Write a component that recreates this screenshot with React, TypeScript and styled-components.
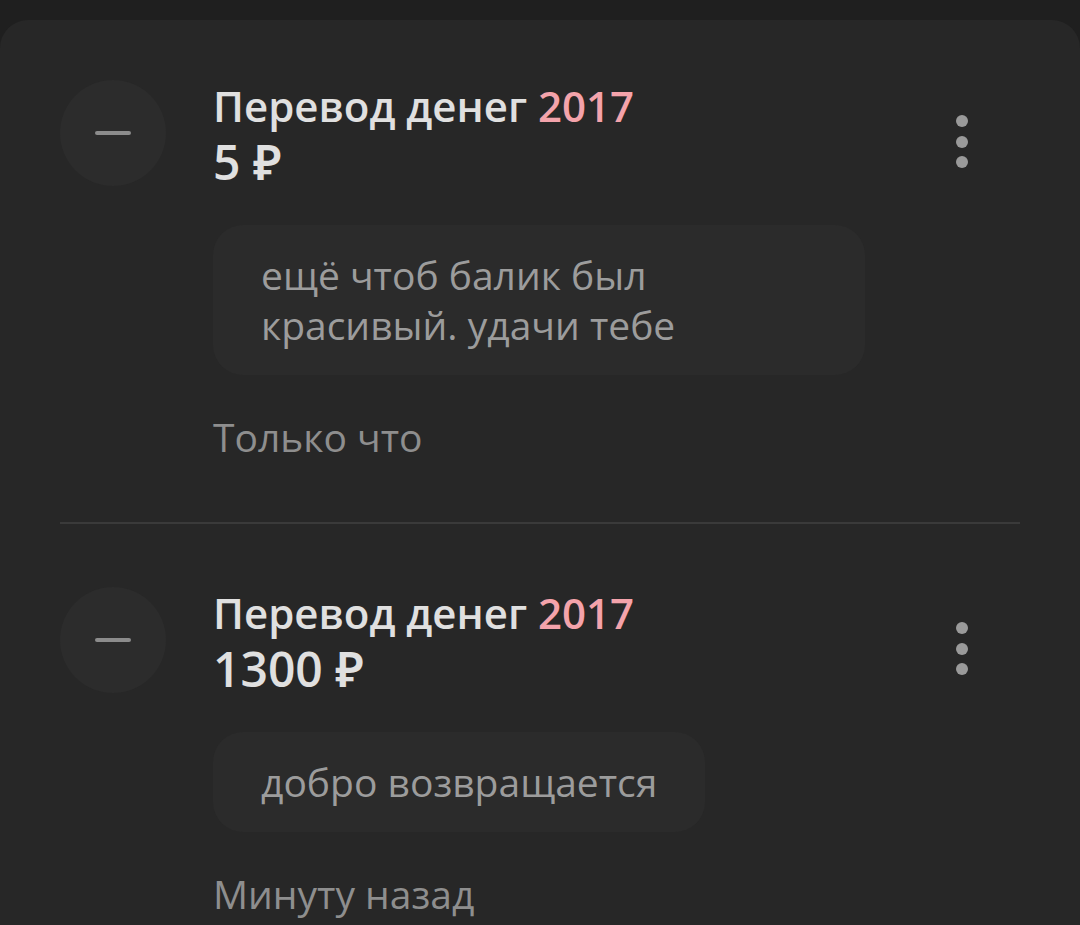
import React from "react";
import styled, { createGlobalStyle } from "styled-components";

const Global = createGlobalStyle`
  html, body { margin: 0; padding: 0; background: #1f1f1f; }
  body { font-family: "Open Sans", "Noto Sans", sans-serif; }
`;

const Page = styled.div`
  padding-top: 20px;
  background: #1f1f1f;
  height: 925px;
  overflow: hidden;
  box-sizing: border-box;
`;

const Card = styled.div`
  background: #272727;
  border-radius: 28px 28px 0 0;
  min-height: 905px;
  padding: 0 60px;
  box-sizing: border-box;
`;

const Item = styled.div`
  display: flex;
  align-items: flex-start;
  padding: 60px 0 60px;
`;

const Avatar = styled.div`
  width: 106px;
  height: 106px;
  border-radius: 50%;
  background: #2c2c2c;
  flex: none;
  display: flex;
  align-items: center;
  justify-content: center;
`;

const Minus = styled.span`
  width: 36px;
  height: 4px;
  border-radius: 2px;
  background: #8c8c8c;
`;

const Content = styled.div`
  flex: 1;
  margin-left: 47px;
  display: flex;
  flex-direction: column;
  align-items: flex-start;
`;

const Title = styled.div`
  font-size: 42px;
  font-weight: 600;
  line-height: 56px;
  color: #e0e0e0;
  margin-top: -2px;
`;

const Year = styled.span`
  color: #f4a3ab;
`;

const Amount = styled.div`
  font-size: 48px;
  font-weight: 600;
  line-height: 56px;
  color: #e0e0e0;
`;

const Bubble = styled.div`
  margin-top: 35px;
  box-sizing: border-box;
  max-width: 652px;
  background: #2b2b2b;
  border-radius: 30px;
  padding: 25px 48px;
  font-size: 39px;
  line-height: 50px;
  color: #9c9c9c;
`;

const Time = styled.div`
  margin-top: 37px;
  font-size: 39px;
  line-height: 50px;
  color: #8e8e8e;
`;

const Menu = styled.div`
  flex: none;
  width: 12px;
  margin: 35px 52px 0 0;
  display: flex;
  flex-direction: column;
  gap: 8.5px;
`;

const Dot = styled.span`
  width: 12px;
  height: 12px;
  border-radius: 50%;
  background: #9a9a9a;
`;

const Divider = styled.div`
  height: 2px;
  background: #3a3a3a;
  margin-bottom: 3px;
`;

type Tx = { amount: string; message: string; time: string };

const data: Tx[] = [
  { amount: "5 ₽", message: "ещё чтоб балик был красивый. удачи тебе", time: "Только что" },
  { amount: "1300 ₽", message: "добро возвращается", time: "Минуту назад" },
];

function Row({ tx }: { tx: Tx }) {
  return (
    <Item>
      <Avatar>
        <Minus />
      </Avatar>
      <Content>
        <Title>
          Перевод денег <Year>2017</Year>
        </Title>
        <Amount>{tx.amount}</Amount>
        <Bubble>{tx.message}</Bubble>
        <Time>{tx.time}</Time>
      </Content>
      <Menu>
        <Dot />
        <Dot />
        <Dot />
      </Menu>
    </Item>
  );
}

export default function App() {
  return (
    <Page>
      <Global />
      <Card>
        {data.map((tx, i) => (
          <React.Fragment key={i}>
            {i > 0 && <Divider />}
            <Row tx={tx} />
          </React.Fragment>
        ))}
      </Card>
    </Page>
  );
}
